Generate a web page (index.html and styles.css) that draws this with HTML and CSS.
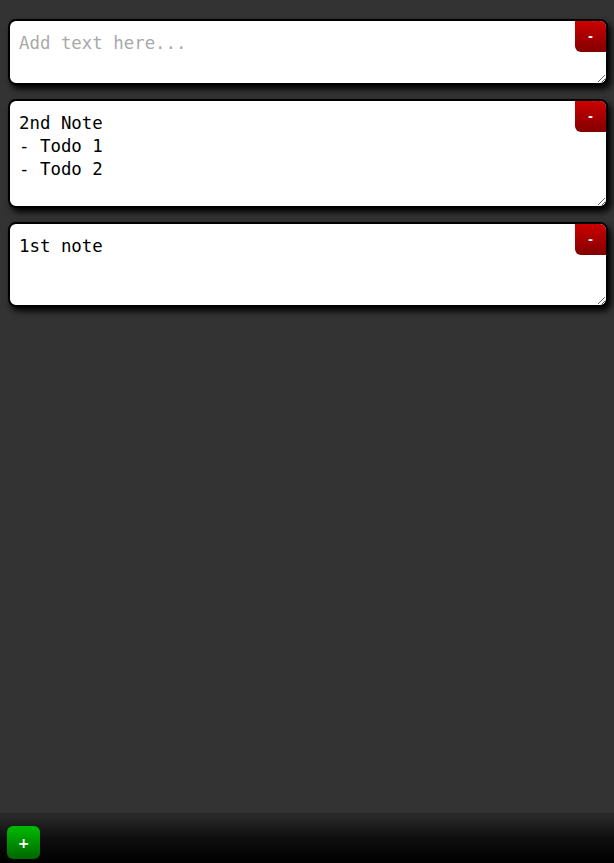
FILE: index.html
```html
<!DOCTYPE html>
<html>
<head>
<meta charset="utf-8">
<title>Notes</title>
<link rel="stylesheet" href="styles.css">
</head>
<body>
<div class="app">
  <main class="notes">
    <div class="note">
      <textarea class="note-text h-new" placeholder="Add text here..."></textarea>
      <button class="del">-</button>
    </div>
    <div class="note">
      <textarea class="note-text h-tall">2nd Note
- Todo 1
- Todo 2</textarea>
      <button class="del">-</button>
    </div>
    <div class="note">
      <textarea class="note-text h-mid">1st note</textarea>
      <button class="del">-</button>
    </div>
  </main>
  <footer class="bar">
    <button class="add">+</button>
  </footer>
</div>
</body>
</html>
```
FILE: styles.css
```css
html, body {
  margin: 0;
  padding: 0;
  height: 100%;
  background: #333333;
}
.app {
  display: flex;
  flex-direction: column;
  height: 100vh;
}
.notes {
  flex: 1;
  display: flex;
  flex-direction: column;
  gap: 14px;
  padding: 19px 6px 0 8px;
}
.note {
  position: relative;
  width: 600px;
}
.note-text {
  display: block;
  box-sizing: border-box;
  width: 600px;
  margin: 0;
  border: 2px solid #000;
  border-radius: 8px;
  background: #fff;
  box-shadow: 3px 4px 6px #000;
  padding: 11px 9px 9px 9px;
  font-family: "DejaVu Sans Mono", "Liberation Mono", monospace;
  font-size: 17.4px;
  line-height: 23px;
  color: #000;
  outline: none;
}
.note-text::placeholder {
  color: #a9a9a9;
}
.h-new { height: 66px; }
.h-tall { height: 109px; }
.h-mid { height: 85px; }
.del {
  position: absolute;
  top: 2px;
  right: 2px;
  width: 31px;
  height: 31px;
  border: none;
  margin: 0;
  padding: 0;
  border-radius: 0 6px 0 6px;
  background: linear-gradient(to bottom, #cc0000, #820000);
  color: #fff;
  font-family: "DejaVu Sans", sans-serif;
  font-weight: bold;
  font-size: 12px;
}
.bar {
  height: 50px;
  box-sizing: border-box;
  background: linear-gradient(to bottom, #2b2b2b 0%, #0e0e0e 50%, #000 100%);
  border-top: 1px solid #262626;
  display: flex;
  align-items: flex-end;
  padding: 0 0 4px 7px;
}
.add {
  width: 33px;
  height: 33px;
  margin: 0;
  padding: 0;
  border: none;
  border-radius: 6px;
  background: linear-gradient(to bottom, #00bb00, #006600);
  color: #fff;
  font-family: "DejaVu Sans", sans-serif;
  font-weight: bold;
  font-size: 14px;
}
```
